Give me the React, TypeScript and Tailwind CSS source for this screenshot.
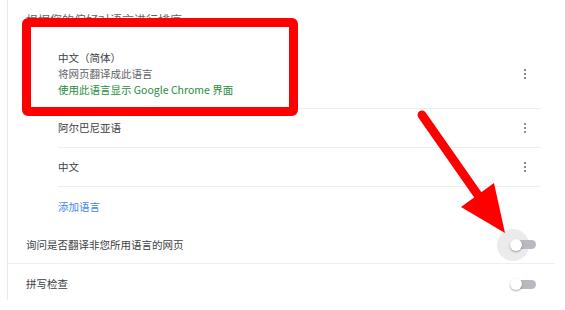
const font = { fontFamily: '"Noto Sans CJK SC", "Noto Sans", sans-serif' };

function Kebab() {
  return (
    <div className="flex flex-col items-center gap-[1.5px] w-[4px]">
      <span className="w-[2.5px] h-[2.5px] rounded-full bg-[#5f6368]" />
      <span className="w-[2.5px] h-[2.5px] rounded-full bg-[#5f6368]" />
      <span className="w-[2.5px] h-[2.5px] rounded-full bg-[#5f6368]" />
    </div>
  );
}

function Toggle({ halo }: { halo?: boolean }) {
  return (
    <div className="relative w-[26px] h-[12px] flex items-center">
      {halo && <div className="absolute -left-[13px] -top-[10px] w-[32px] h-[32px] rounded-full bg-[#ebebeb]" />}
      <div className="absolute left-[3px] right-0 h-[9px] rounded-full bg-[#b6b9bd]" />
      <div className="absolute left-0 w-[12px] h-[12px] rounded-full bg-white shadow-[0_1px_2px_rgba(0,0,0,0.35)]" />
    </div>
  );
}

const languages = ['阿尔巴尼亚语', '中文'];

export default function App() {
  return (
    <div className="relative w-[565px] h-[310px] bg-white overflow-hidden text-[10.5px] text-[#5f6368]" style={font}>
      <div className="ml-[7px] w-[548px] h-[300px] border-l border-[#e8eaed] flex flex-col">
        <div className="pl-[18px] pt-[12px] h-[28px] text-[12px] leading-[16px] text-[#5f6368]">根据您的偏好对语言进行排序</div>

        <div className="ml-[50px] w-[482px] border-b border-[#eeeeee] h-[81px] pt-[22px] flex items-center justify-between pr-[13px]">
          <div className="flex flex-col leading-[16px] -mt-[10px]">
            <span className="text-[#3c4043]">中文（简体）</span>
            <span>将网页翻译成此语言</span>
            <span className="text-[#1e8e3e]">使用此语言显示 Google Chrome 界面</span>
          </div>
          <div className="-mt-[10px]"><Kebab /></div>
        </div>

        {languages.map((l) => (
          <div key={l} className="ml-[50px] w-[482px] h-[39px] border-b border-[#eeeeee] flex items-center justify-between pr-[13px] text-[#3c4043]">
            <span>{l}</span>
            <Kebab />
          </div>
        ))}

        <div className="ml-[50px] h-[39px] flex items-center text-[#4285f4]">添加语言</div>

        <div className="h-[38px] border-b border-[#eeeeee] flex items-center justify-between pl-[18px] pr-[19px] text-[#3c4043]">
          <span>询问是否翻译非您所用语言的网页</span>
          <Toggle halo />
        </div>

        <div className="h-[36px] pt-[4px] flex items-center justify-between pl-[18px] pr-[19px] text-[#3c4043]">
          <span>拼写检查</span>
          <Toggle />
        </div>
      </div>

      <div className="absolute left-[22px] top-[18px] w-[276px] h-[98px] border-[9px] border-[#ff0000] rounded-[6px]" />

      <svg className="absolute left-0 top-0" width="565" height="310" viewBox="0 0 565 310">
        <line x1="422" y1="115" x2="480" y2="198" stroke="#ff0000" strokeWidth="9" strokeLinecap="round" />
        <polygon points="461,207 494,183 505,233" fill="#ff0000" />
      </svg>
    </div>
  );
}
